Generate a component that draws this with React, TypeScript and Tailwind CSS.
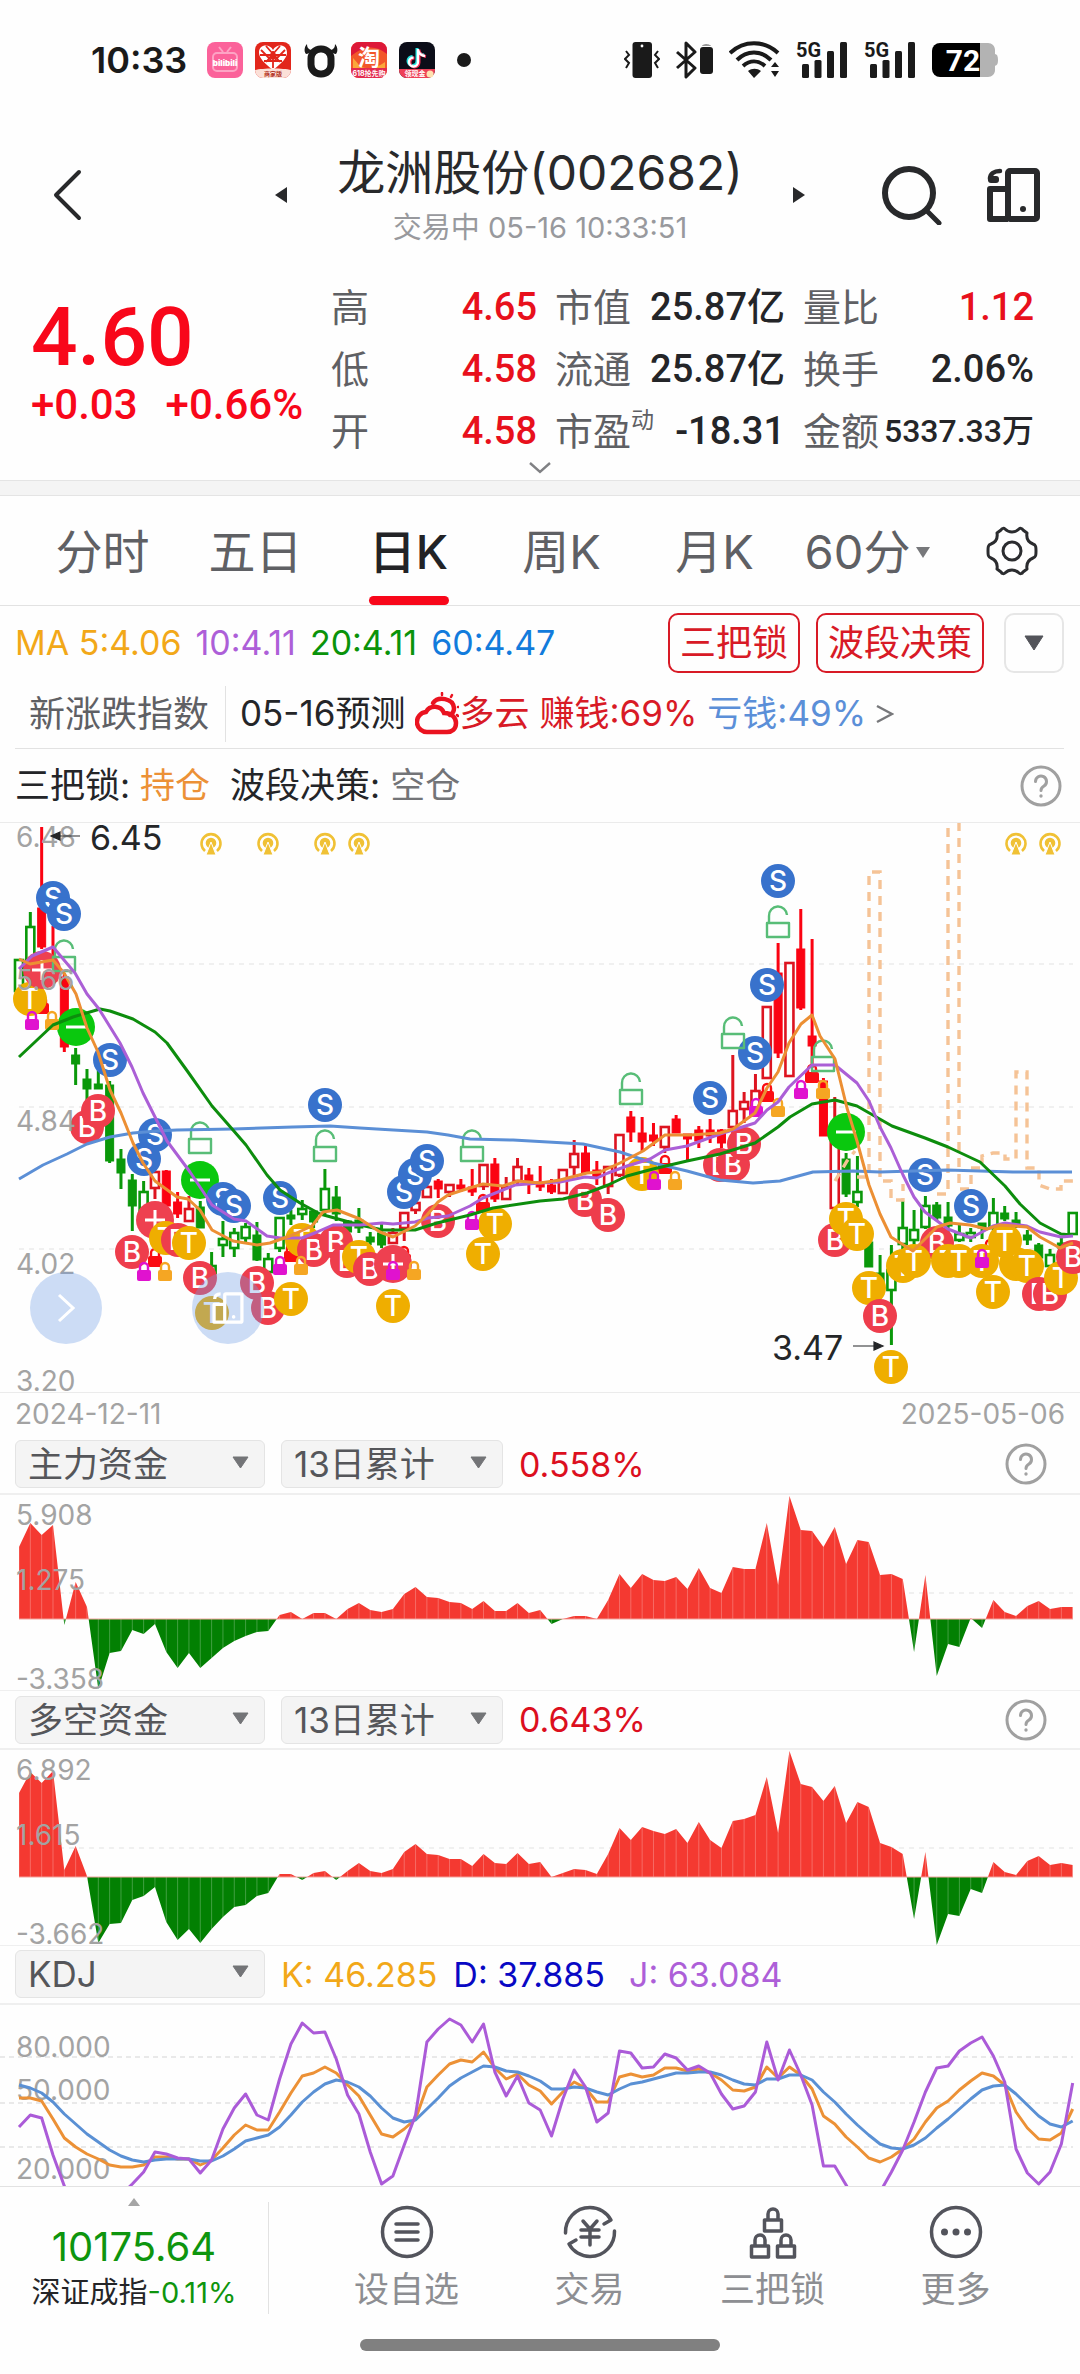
import { useState } from "react";
import type { ReactNode } from "react";

const STEP = 11.33;
const xAt = (i: number) => 19 + i * STEP;

// [high, bodyTop, bodyBottom, low, kind]
// kind: R filled red, r hollow red, G filled green, g hollow green
type Candle = [number, number, number, number, "R" | "r" | "G" | "g"];

const candles: Candle[] = [
  [136, 137, 168, 168, "g"], [89, 104, 140, 146, "g"], [4, 85, 124, 126, "R"], [103, 140, 158, 160, "R"],
  [150, 154, 224, 229, "R"], [225, 232, 241, 262, "G"], [246, 256, 266, 281, "G"], [241, 261, 266, 266, "G"],
  [258, 262, 338, 340, "G"], [326, 336, 350, 366, "G"], [351, 357, 383, 408, "G"], [358, 369, 388, 388, "g"],
  [348, 349, 365, 376, "r"], [347, 348, 383, 383, "R"], [369, 379, 391, 395, "R"], [373, 386, 398, 398, "r"],
  [378, 384, 405, 405, "G"], [429, 443, 450, 450, "g"], [398, 416, 422, 434, "g"], [405, 410, 425, 434, "g"],
  [400, 404, 415, 419, "g"], [399, 412, 437, 438, "G"], [430, 436, 449, 451, "g"], [395, 395, 425, 429, "g"],
  [387, 392, 396, 402, "G"], [377, 386, 391, 397, "g"], [387, 388, 399, 405, "G"], [346, 366, 387, 391, "g"],
  [363, 374, 391, 398, "G"], [397, 398, 409, 409, "G"], [385, 397, 405, 410, "G"], [409, 414, 419, 422, "G"],
  [401, 410, 422, 425, "G"], [405, 410, 420, 420, "r"], [389, 390, 405, 418, "r"], [380, 380, 387, 391, "r"],
  [362, 364, 374, 375, "r"], [356, 358, 366, 375, "R"], [361, 362, 369, 374, "r"], [356, 362, 366, 369, "R"],
  [346, 364, 369, 373, "R"], [341, 342, 363, 367, "r"], [335, 341, 376, 379, "R"], [354, 364, 376, 376, "r"],
  [335, 344, 358, 361, "r"], [345, 352, 358, 371, "R"], [343, 359, 364, 368, "R"], [356, 362, 369, 371, "R"],
  [346, 347, 370, 370, "r"], [317, 331, 344, 352, "r"], [323, 330, 350, 350, "R"], [338, 347, 354, 362, "R"],
  [343, 344, 363, 371, "r"], [311, 312, 352, 354, "r"], [288, 294, 309, 319, "R"], [294, 310, 319, 328, "R"],
  [300, 312, 318, 323, "R"], [303, 304, 324, 330, "r"], [292, 296, 310, 310, "R"], [311, 311, 316, 338, "R"],
  [303, 307, 318, 325, "R"], [296, 307, 313, 320, "R"], [306, 307, 320, 325, "R"], [232, 288, 304, 312, "r"],
  [269, 279, 286, 300, "r"], [251, 268, 288, 292, "r"], [183, 184, 255, 255, "r"], [120, 150, 230, 235, "R"],
  [139, 140, 253, 253, "r"], [86, 126, 185, 187, "R"], [116, 213, 223, 245, "R"], [255, 258, 313, 313, "R"],
  [274, 305, 385, 392, "r"], [330, 336, 371, 374, "G"], [333, 369, 379, 384, "g"], [415, 419, 444, 444, "G"],
  [432, 450, 465, 470, "G"], [422, 447, 467, 522, "g"], [378, 405, 421, 427, "g"], [387, 407, 417, 422, "g"],
  [373, 383, 404, 406, "g"], [379, 382, 395, 398, "G"], [379, 394, 403, 410, "G"], [402, 411, 417, 419, "g"],
  [405, 410, 414, 419, "g"], [400, 400, 405, 416, "G"], [375, 390, 405, 410, "g"], [383, 390, 396, 398, "G"],
  [389, 397, 402, 405, "G"], [407, 412, 417, 422, "G"], [420, 422, 435, 437, "G"], [426, 432, 443, 446, "g"],
  [415, 420, 425, 428, "G"], [389, 390, 411, 411, "g"],
];

const ma60 =
  "19,356 43,342 67,331 87,321 110,314 133,310 157,308 177,307 233,306 293,304 330,303 360,305 427,309 448,312 470,316 513,317 583,321 620,329 653,340 687,348 720,357 753,360 780,358 813,349 853,348 880,349 947,347 1013,349 1072,349";
const ma20 =
  "19,234 53,202 73,194 100,186 110,188 133,196 155,209 167,220 188,249 212,283 233,307 246,322 267,352 280,367 300,380 320,391 360,402 383,407 415,407 437,400 470,392 493,385 540,378 563,376 587,370 608,362 627,353 653,346 687,338 720,331 755,320 778,304 790,294 812,281 835,277 857,283 892,303 925,315 948,324 980,339 1005,363 1020,381 1040,400 1061,411 1072,412";
const ma10 =
  "19,146 32,133 53,124 75,150 87,171 99,186 120,220 132,244 143,270 167,318 190,349 212,382 234,396 246,398 267,413 280,415 302,415 317,409 333,402 360,402 382,400 393,401 415,399 428,395 448,393 470,383 483,375 515,362 540,360 560,359 585,354 597,355 608,350 627,343 650,336 665,327 687,323 720,311 755,300 767,287 778,279 789,264 812,242 835,242 857,260 869,278 880,304 891,325 903,352 914,374 925,389 948,406 971,415 993,403 1005,400 1027,403 1040,409 1061,414 1073,413";
const ma5 =
  "19,136 30,141 53,137 64,150 76,171 87,205 98,229 110,267 121,290 133,320 143,340 155,358 177,374 188,376 200,387 212,407 233,418 257,422 270,420 290,413 312,403 323,389 337,387 360,396 380,409 393,414 415,403 427,392 438,379 448,372 460,368 483,361 503,363 518,358 540,360 560,357 587,350 600,349 620,340 643,328 665,312 690,312 720,310 733,306 755,290 767,265 778,249 789,220 801,201 812,192 820,213 835,236 847,285 857,318 869,362 880,391 891,414 913,428 937,404 950,400 970,402 987,406 1000,402 1027,404 1040,414 1060,425 1073,420";

type Marker = ["S" | "B" | "T" | "+" | "-", number, number];

const markers: Marker[] = [
  ["S", 53, 75], ["S", 64, 91], ["T", 30, 176], ["+", 42, 147], ["-", 76, 204], ["S", 110, 237],
  ["B", 87, 304], ["B", 98, 288], ["S", 155, 312], ["S", 144, 336], ["-", 200, 357], ["S", 223, 376],
  ["S", 234, 383], ["S", 280, 375], ["S", 325, 282], ["+", 155, 397], ["T", 166, 415], ["B", 178, 417],
  ["T", 189, 420], ["B", 132, 429], ["B", 200, 455], ["T", 212, 490], ["B", 257, 460], ["B", 268, 485],
  ["T", 291, 476], ["T", 302, 417], ["B", 314, 427], ["B", 336, 419], ["B", 347, 438], ["T", 359, 434],
  ["B", 370, 446], ["+", 393, 441], ["T", 393, 483], ["S", 404, 369], ["S", 415, 352], ["S", 427, 338],
  ["B", 438, 398], ["T", 495, 401], ["T", 483, 431], ["B", 585, 377], ["B", 608, 392], ["T", 642, 351],
  ["S", 710, 275], ["B", 720, 342], ["B", 733, 342], ["B", 744, 321], ["S", 755, 230], ["S", 767, 162],
  ["S", 778, 58], ["-", 846, 309], ["B", 835, 417], ["T", 846, 396], ["T", 857, 411], ["T", 869, 465],
  ["B", 880, 493], ["T", 891, 544], ["B", 937, 420], ["T", 903, 443], ["T", 914, 438], ["S", 925, 352],
  ["T", 948, 438], ["T", 959, 438], ["T", 982, 438], ["S", 971, 383], ["T", 993, 469], ["T", 1016, 441],
  ["T", 1005, 418], ["T", 1027, 443], ["B", 1039, 471], ["B", 1050, 471], ["T", 1061, 455], ["B", 1073, 434],
];

const redLocks = [[42, 181], [155, 434], [291, 429], [404, 432], [483, 380], [665, 341], [767, 269], [812, 250], [990, 425]];
const magentaLocks = [[32, 197], [144, 448], [280, 442], [393, 447], [472, 397], [654, 357], [756, 284], [801, 266], [982, 435]];
const orangeLocks = [[52, 197], [165, 448], [301, 442], [414, 447], [675, 357], [778, 284], [823, 266]];
const openLocks = [[64, 117], [200, 299], [325, 307], [472, 307], [631, 250], [733, 194], [778, 83], [823, 217]];
const signals = [211, 268, 325, 359, 1016, 1050];

const mainFund = [
  72, 96, 84, 94, -6, 37, 12, -70, -34, -32, -11, -15, -5, -33, -49, -34, -49, -39, -29, -22, -17, -13, -12, 4, 7, 0,
  6, 6, 0, 10, 16, 9, 7, 10, 25, 32, 22, 21, 17, 16, 10, 18, 8, 8, 16, 6, 9, -5, 0, 3, 3, 0, 19, 45, 31, 45, 39, 38,
  42, 30, 51, 31, 26, 52, 50, 50, 96, 34, 123, 89, 88, 72, 92, 55, 79, 77, 44, 45, 40, -33, 44, -57, -25, -28, 1, -9,
  19, 7, 3, 13, 18, 10, 12, 12,
];

const longShortFund = [
  84, 105, 94, 106, 7, 31, 1, -66, -47, -46, -23, -19, -10, -45, -63, -52, -66, -52, -40, -30, -28, -19, -16, 3, 3, -3,
  4, 6, -3, 6, 14, 6, 4, 8, 25, 33, 23, 22, 18, 18, 11, 23, 14, 13, 24, 13, 15, 0, 4, 8, 7, 3, 23, 49, 37, 50, 46, 43,
  48, 34, 55, 37, 29, 56, 58, 62, 100, 44, 126, 93, 90, 76, 91, 54, 75, 70, 34, 30, 23, -42, 25, -68, -37, -39, -12,
  -16, 15, 5, 2, 16, 21, 12, 14, 12,
];

const lineJ = [
  122, 110, 113, 150, 181, 200, 210, 210, 204, 190, 179, 167, 147, 149, 153, 154, 168, 155, 124, 103, 89, 110, 115, 74,
  39, 18, 28, 27, 54, 90, 109, 147, 179, 171, 140, 110, 37, 24, 14, 20, 37, 19, 67, 91, 71, 98, 105, 131, 94, 65, 82,
  117, 108, 46, 48, 63, 62, 49, 53, 65, 61, 68, 89, 104, 101, 87, 37, 75, 45, 70, 100, 161, 161, 180, 200, 205, 187,
  167, 145, 117, 87, 63, 61, 46, 38, 32, 51, 77, 144, 168, 179, 167, 139, 78,
];
const lineK = [
  93, 93, 96, 114, 133, 142, 149, 154, 160, 162, 162, 160, 152, 152, 154, 154, 160, 155, 143, 130, 120, 125, 125, 107,
  88, 71, 68, 62, 68, 80, 91, 110, 129, 132, 124, 114, 82, 70, 59, 55, 57, 47, 63, 74, 69, 80, 86, 99, 87, 77, 83, 97,
  97, 72, 69, 72, 70, 63, 63, 66, 64, 68, 75, 85, 86, 82, 62, 73, 62, 70, 84, 111, 119, 132, 142, 153, 157, 152, 144,
  134, 117, 103, 96, 85, 76, 68, 71, 80, 107, 123, 134, 135, 128, 104,
];
const lineD = [
  80, 83, 88, 97, 109, 119, 129, 137, 145, 151, 155, 157, 155, 154, 154, 154, 156, 156, 151, 144, 136, 133, 130, 122,
  110, 97, 87, 79, 75, 77, 82, 91, 103, 113, 117, 115, 104, 93, 81, 73, 67, 61, 62, 66, 67, 71, 76, 84, 84, 82, 83, 87,
  90, 84, 79, 77, 74, 71, 68, 68, 67, 67, 70, 75, 79, 80, 74, 74, 70, 70, 75, 87, 97, 109, 120, 130, 139, 143, 144,
  140, 133, 123, 114, 104, 94, 85, 81, 80, 89, 100, 111, 119, 122, 116,
];

const toPoints = (ys: number[]) => ys.map((y, i) => `${xAt(i)},${y}`).join(" ");

const markerFill = { S: "#3872cc", B: "#ee3d4c", T: "#efae00", "+": "#ee4050", "-": "#0ac80e" };

function CandleStick({ i, data }: { i: number; data: Candle }) {
  const [high, top, bottom, low, kind] = data;
  const color = kind === "R" ? "#fb0312" : kind === "r" ? "#dd1420" : "#0a980a";
  const hollow = kind === "r" || kind === "g";
  const x = xAt(i);
  return (
    <g stroke={color} strokeWidth="3">
      <path d={`M${x} ${high}V${top}M${x} ${bottom}V${low}`} />
      <rect x={x - 4} y={top} width="8" height={Math.max(bottom - top, 2)} fill={hollow ? "#fff" : color} strokeWidth={hollow ? 2.6 : 1} />
    </g>
  );
}

function Lock({ x, y, color }: { x: number; y: number; color: string }) {
  return (
    <g>
      <path d={`M${x - 4} ${y}v-4a4 4 0 0 1 8 0v4`} fill="none" stroke={color} strokeWidth="2.4" />
      <rect x={x - 7} y={y - 1} width="14" height="11" rx="2" fill={color} />
    </g>
  );
}

function MarkerDot({ marker }: { marker: Marker }) {
  const [kind, x, y] = marker;
  if (kind === "+" || kind === "-") {
    return (
      <g>
        <circle cx={x} cy={y} r="19" fill={markerFill[kind]} />
        <path d={kind === "-" ? `M${x - 10} ${y}h20` : `M${x - 10} ${y}h20M${x} ${y - 10}v20`} stroke="#fff" strokeWidth="3" />
      </g>
    );
  }
  return (
    <g>
      <circle cx={x} cy={y} r="17" fill={markerFill[kind]} />
      <text x={x} y={y + 10} textAnchor="middle" fontSize="28" fontWeight="500" fill="#fff">
        {kind}
      </text>
    </g>
  );
}

function KLineChart() {
  return (
    <svg viewBox="0 0 1080 569" className="block h-auto w-full" role="img" aria-label="日K">
      <g stroke="#ececec" strokeWidth="1.5" strokeDasharray="5 5">
        <path d="M19 141H1073M19 284H1073M19 426H1073" />
      </g>
      {candles.map((c, i) => (
        <CandleStick key={i} i={i} data={c} />
      ))}
      <path
        d="M835 358l12-20 8-10M857 354H869V49H880V358H891V377H903V361M937 371H948V-4H959V366H971V345H982V333L993 330H1005V336H1016V249H1027V345H1039V362L1050 366H1061V358H1073"
        fill="none"
        stroke="#f5c396"
        strokeWidth="3.4"
        strokeDasharray="9 7"
      />
      {redLocks.map(([x, y]) => (
        <Lock key={x} x={x} y={y} color="#fb0d12" />
      ))}
      {markers.map((m, i) => (
        <MarkerDot key={i} marker={m} />
      ))}
      {magentaLocks.map(([x, y]) => (
        <Lock key={x} x={x} y={y} color="#e012cf" />
      ))}
      {orangeLocks.map(([x, y]) => (
        <Lock key={x} x={x} y={y} color="#f5a623" />
      ))}
      {openLocks.map(([x, y]) => (
        <path
          key={x}
          d={`M${x - 11} ${y + 17}h22v14h-22zM${x - 9} ${y + 17}v-7a9 9 0 0 1 18-1`}
          fill="none"
          stroke="#58bd77"
          strokeWidth="2.4"
          strokeLinejoin="round"
        />
      ))}
      <g fill="none" strokeWidth="3" strokeLinejoin="round">
        <polyline points={ma60} stroke="#5b8fd6" />
        <polyline points={ma20} stroke="#0d8d0d" />
        <polyline points={ma10} stroke="#ab5fd6" />
        <polyline points={ma5} stroke="#ec8f33" />
      </g>
      {signals.map((x) => (
        <g key={x} fill="none" stroke="#f0c135" strokeWidth="2.6">
          <path d={`M${x - 6} 28a9.5 9.5 0 1 1 12 0`} />
          <circle cx={x} cy="20" r="4" fill="#f0c135" />
          <path d={`M${x} 19l-5 13h10z`} fill="#f0c135" stroke="#fff" strokeWidth="1" />
        </g>
      ))}
      <g fill="#a3a3a3" fontSize="28">
        <text x="16" y="24">6.48</text>
        <text x="16" y="167">5.66</text>
        <text x="16" y="308">4.84</text>
        <text x="16" y="451">4.02</text>
        <text x="16" y="568">3.20</text>
      </g>
      <g fill="#242628" fontSize="34">
        <text x="90" y="27">6.45</text>
        <text x="772" y="537">3.47</text>
      </g>
      <g stroke="#242628" fill="#242628" strokeWidth="1.2">
        <path d="M60 13h20M60 9l-9 4 9 4zM853 523h22M874 519l9 4-9 4z" />
      </g>
    </svg>
  );
}

function FundChart({ id, values, zero, grid, labels }: { id: string; values: number[]; zero: number; grid: number; labels: string[] }) {
  const area = `${xAt(0)},${zero} ${toPoints(values.map((v) => zero - v))} ${xAt(93)},${zero}`;
  return (
    <svg viewBox="0 0 1080 195" className="block h-auto w-full" role="img" aria-label={labels.join(" ")}>
      <clipPath id={`${id}-up`}>
        <rect width="1080" height={zero} />
      </clipPath>
      <clipPath id={`${id}-down`}>
        <rect y={zero} width="1080" height={195 - zero} />
      </clipPath>
      <clipPath id={`${id}-area`}>
        <polygon points={area} />
      </clipPath>
      <path d={`M19 ${grid}H1073`} stroke="#ececec" strokeWidth="1.5" strokeDasharray="5 5" />
      <polygon points={area} fill="#f43931" clipPath={`url(#${id}-up)`} />
      <polygon points={area} fill="#028002" clipPath={`url(#${id}-down)`} />
      <path d={values.map((_, i) => `M${xAt(i)} 0V195`).join("")} stroke="#fff" strokeOpacity="0.25" clipPath={`url(#${id}-area)`} />
      <path d={`M19 ${zero}H1073`} stroke="#f3a29c" strokeWidth="1" />
      <g fill="#a3a3a3" fontSize="28">
        <text x="16" y="30">{labels[0]}</text>
        <text x="16" y="95">{labels[1]}</text>
        <text x="16" y="194">{labels[2]}</text>
      </g>
    </svg>
  );
}

function KdjChart() {
  return (
    <svg viewBox="0 0 1080 181" className="block h-auto w-full overflow-hidden" role="img" aria-label="KDJ">
      <path d="M0 52H1073M0 98H1073M0 142H1073" stroke="#e2e2e2" strokeWidth="1.5" strokeDasharray="5 4" />
      <g fill="#a3a3a3" fontSize="28">
        <text x="16" y="52">80.000</text>
        <text x="16" y="95">50.000</text>
        <text x="16" y="174">20.000</text>
      </g>
      <g fill="none" strokeWidth="3" strokeLinejoin="round">
        <polyline points={toPoints(lineK)} stroke="#ec9136" />
        <polyline points={toPoints(lineD)} stroke="#5a90d4" />
        <polyline points={toPoints(lineJ)} stroke="#ab5bd8" />
      </g>
    </svg>
  );
}

function HelpButton({ label }: { label: string }) {
  return (
    <button type="button" aria-label={label} className="ml-auto shrink-0">
      <svg width="42" height="42" viewBox="0 0 42 42" fill="none" stroke="#a0a0a0" strokeWidth="3" strokeLinecap="round">
        <circle cx="21" cy="21" r="19" />
        <path d="M15.5 16.5a5.5 5.5 0 1 1 8.500 4.600c-2 1.300-3 2.300-3 4.400" />
        <circle cx="21" cy="31" r="1" fill="#a0a0a0" strokeWidth="1.4" />
      </svg>
    </button>
  );
}

function Picker({ label, options, wide }: { label: string; options: string[]; wide?: boolean }) {
  return (
    <div className={wide ? "relative w-[250px]" : "relative w-[222px]"}>
      <select
        aria-label={label}
        className="h-12 w-full appearance-none rounded-md border border-[#e4e4e4] bg-[#f4f4f4] pl-3 text-[35px] leading-[44px] text-[#55565a] outline-none"
      >
        {options.map((o) => (
          <option key={o}>{o}</option>
        ))}
      </select>
      <svg width="17" height="13" viewBox="0 0 17 13" className="pointer-events-none absolute right-4 top-4">
        <path d="M1 1h15L8.5 12z" fill="#737477" stroke="#737477" strokeLinejoin="round" />
      </svg>
    </div>
  );
}

function Signal() {
  return (
    <svg width="52" height="38" viewBox="0 0 52 38" className="overflow-visible">
      <text x="0" y="16" fontSize="20" fontWeight="700" fill="#1a1a1a" className="[font-family:Roboto,sans-serif]">5G</text>
      <g fill="#1a1a1a">
        <rect x="6" y="23" width="7" height="14" rx="1.5" />
        <rect x="18.5" y="19" width="7" height="18" rx="1.5" />
        <rect x="31" y="10" width="7" height="27" rx="1.5" />
        <rect x="44" y="1" width="7" height="36" rx="1.5" />
      </g>
    </svg>
  );
}

function StatusBar() {
  return (
    <div className="flex h-[120px] items-center pl-[91px] pr-[82px] text-[#1a1a1a]">
      <span className="text-[36px] font-semibold leading-10">10:33</span>
      <div className="ml-5 flex items-center gap-3">
        <svg width="36" height="36" viewBox="0 0 36 36">
          <rect width="36" height="36" rx="8" fill="#fb629a" />
          <g fill="none" stroke="#fda3c4" strokeWidth="2">
            <rect x="6" y="11" width="24" height="18" rx="4" />
            <path d="M12 5l4 5M24 5l-4 5" />
          </g>
          <text x="18" y="24" textAnchor="middle" fontSize="8" fontWeight="900" fill="#fff">bilibili</text>
        </svg>
        <svg width="36" height="36" viewBox="0 0 36 36">
          <rect width="36" height="36" rx="8" fill="#e2261b" />
          <path d="M18 28C9 21 4 16 4 10.5 4 6 7 3.5 10.5 3.5S16.5 5 18 8c1.500-3 4-4.500 7.500-4.500S32 6 32 10.500C32 16 27 21 18 28z" fill="#fff" />
          <path d="M6 8l10 10M11 4l14 16M30 8L20 18M25 4L11 20M18 9v17M5 13h26M9 19h18" stroke="#e2261b" strokeWidth="1.8" />
          <circle cx="18" cy="14" r="3.5" fill="#e2261b" />
          <path d="M0 28c8-2 28-2 36 0a8 8 0 0 1-8 8H8a8 8 0 0 1-8-8z" fill="#fbe0d8" />
          <text x="18" y="34" textAnchor="middle" fontSize="6" fontWeight="700" fill="#b3301f">商家版</text>
        </svg>
        <svg width="36" height="36" viewBox="0 0 36 36">
          <path d="M4 2c0 4 2 6 6 6-3 2-5 4-7 4-2-2-2-7 1-10zM32 2c0 4-2 6-6 6 3 2 5 4 7 4 2-2 2-7-1-10z" fill="#1a1a1a" />
          <rect x="8" y="7" width="20" height="25" rx="9.5" fill="none" stroke="#1a1a1a" strokeWidth="7" />
        </svg>
        <svg width="36" height="36" viewBox="0 0 36 36">
          <rect width="36" height="36" rx="8" fill="#f2572b" />
          <path d="M0 8a8 8 0 0 1 8-8h20a8 8 0 0 1 8 8v4C24 2 12 4 0 14z" fill="#dd1838" />
          <path d="M2 16c6 6 6 10 14 10s12-2 18-6v6H2z" fill="#fba83a" />
          <path d="M0 26h36v2a8 8 0 0 1-8 8H8a8 8 0 0 1-8-8z" fill="#e32b4f" />
          <text x="18" y="23" textAnchor="middle" fontSize="22" fontWeight="700" fill="#fff">淘</text>
          <text x="18" y="34" textAnchor="middle" fontSize="7" fontWeight="700" fill="#fff">618抢先购</text>
        </svg>
        <svg width="36" height="36" viewBox="0 0 36 36">
          <rect width="36" height="36" rx="8" fill="#0b0d18" />
          <g fill="none" strokeWidth="3">
            <path d="M18 6v13a4.500 4.500 0 1 1-4.500-4.500M18 7c1 4 3 5.500 7 6" stroke="#25e5e0" />
            <path d="M20 7.500v13a4.500 4.500 0 1 1-4.500-4.500M20 8.500c1 4 3 5.500 7 6" stroke="#f52b53" />
            <path d="M19 7v13a4.500 4.500 0 1 1-4.500-4.500M19 8c1 4 3 5.500 7 6" stroke="#fff" strokeWidth="2.4" />
          </g>
          <path d="M0 27h36v1a8 8 0 0 1-8 8H8a8 8 0 0 1-8-8z" fill="#ee4058" />
          <text x="16" y="34" textAnchor="middle" fontSize="7" fontWeight="700" fill="#fff">领现金</text>
          <circle cx="31" cy="32" r="3.5" fill="#ffe2b0" />
        </svg>
        <span className="ml-2.5 size-3.5 rounded-full bg-[#1a1a1a]" />
      </div>
      <div className="ml-auto flex items-center gap-4">
        <svg width="36" height="38" viewBox="0 0 36 38">
          <rect x="8.5" y="1" width="19.5" height="36" rx="3" fill="#1a1a1a" />
          <circle cx="18" cy="5" r="1.4" fill="#fff" />
          <path d="M2 10l3 4-4 4 4 4-3 5M34 10l-3 4 4 4-4 4 3 5" fill="none" stroke="#1a1a1a" strokeWidth="2" />
        </svg>
        <svg width="37" height="38" viewBox="0 0 37 38">
          <path d="M1 11l18 16-9 9v-34l9 9-18 16" fill="none" stroke="#1a1a1a" strokeWidth="3" strokeLinejoin="round" />
          <rect x="24" y="6" width="13" height="27" rx="3" fill="#1a1a1a" />
          <path d="M26 5c0-1 2-2 4-2s5 1 5 2z" fill="#999" />
        </svg>
        <svg width="51" height="38" viewBox="0 0 51 38">
          <g fill="none" stroke="#1a1a1a" strokeWidth="4">
            <path d="M1 12C15-1 35-1 49 12M8 19C18 9 32 9 42 19M14 25c7-6 15-6 22 0" />
          </g>
          <path d="M19 30c4-3 9-3 13 0L25 37zM42 26l4-5 4 5zM42 30h8l-4 6z" fill="#1a1a1a" />
        </svg>
        <Signal />
        <Signal />
        <svg width="66" height="36" viewBox="0 0 66 36">
          <path d="M8 1h48c4 0 7 3 7 7v4c2 0 3 2 3 6s-1 5-3 6v4c0 4-3 7-7 7H8z" fill="#b3b3b3" />
          <path d="M48 1H8a8 8 0 0 0-8 8v18a8 8 0 0 0 8 8h40z" fill="#000" />
          <text x="31" y="29" textAnchor="middle" fontSize="30" fontWeight="700" fill="#fff" className="[font-family:Roboto,sans-serif]">72</text>
        </svg>
      </div>
    </div>
  );
}

function Header() {
  return (
    <header className="grid grid-cols-[222px_1fr_222px] items-center pb-0.5 pt-5 text-[#28292b]">
      <button type="button" aria-label="返回" className="ml-[52px] justify-self-start">
        <svg width="30" height="52" viewBox="0 0 30 52" fill="none" stroke="currentColor" strokeWidth="4" strokeLinecap="round" strokeLinejoin="round">
          <path d="M27 3L4 26l23 23" />
        </svg>
      </button>
      <div className="flex items-center justify-between px-[52px]">
        <button type="button" aria-label="上一只">
          <svg width="14" height="18" viewBox="0 0 14 18">
            <path d="M13 1v16L1 9z" fill="currentColor" />
          </svg>
        </button>
        <div className="text-center">
          <h1 className="whitespace-nowrap text-[48px] leading-[66px]">龙洲股份(002682)</h1>
          <p className="text-[29px] leading-[44px] text-[#98999d]">交易中 05-16 10:33:51</p>
        </div>
        <button type="button" aria-label="下一只">
          <svg width="14" height="18" viewBox="0 0 14 18">
            <path d="M1 1v16l12-8z" fill="currentColor" />
          </svg>
        </button>
      </div>
      <div className="flex justify-between pl-6 pr-10">
        <button type="button" aria-label="搜索">
          <svg width="60" height="60" viewBox="0 0 60 60" fill="none" stroke="currentColor" strokeWidth="6" strokeLinecap="round">
            <circle cx="27" cy="28" r="24" />
            <path d="M45 46l12 12" strokeWidth="5" />
          </svg>
        </button>
        <button type="button" aria-label="横屏">
          <svg width="53" height="54" viewBox="0 0 53 54" fill="none" stroke="currentColor" strokeWidth="6" strokeLinejoin="round">
            <rect x="21" y="3" width="29" height="48" rx="2" />
            <path d="M21 21H3v30h18" />
            <circle cx="36" cy="41" r="3" fill="currentColor" stroke="none" />
            <path d="M3 11C3 6 7 3 13 3" strokeWidth="4.5" strokeLinecap="round" />
            <rect x="1" y="8" width="11" height="7" rx="3" fill="currentColor" stroke="none" />
          </svg>
        </button>
      </div>
    </header>
  );
}

function Quote({ label, value, tone = "dark" }: { label: ReactNode; value: string; tone?: "red" | "dark" | "small" }) {
  const tones = {
    red: "text-[38px] text-[#e8101c]",
    dark: "text-[38px] text-[#242528]",
    small: "text-[32px] text-[#242528]",
  };
  return (
    <div className="flex h-[62px] items-center justify-between whitespace-nowrap">
      <dt className="flex text-[38px] leading-[62px] text-[#5f6064]">{label}</dt>
      <dd className={`${tones[tone]} font-medium leading-[56px] [font-family:Roboto,'Noto_Sans_CJK_SC',sans-serif]`}>{value}</dd>
    </div>
  );
}

function QuotePanel() {
  return (
    <section>
      <div className="flex pl-[31px] pr-[46px] pt-6">
        <div className="w-[300px] shrink-0 pt-4 font-medium text-[#f8071a] [font-family:Roboto,sans-serif]">
          <p className="text-[82px] leading-[90px]">4.60</p>
          <p className="flex gap-7 text-[42px] leading-[46px]">
            <span>+0.03</span>
            <span>+0.66%</span>
          </p>
        </div>
        <dl className="grid flex-1 grid-cols-[206fr_230fr_231fr] gap-x-[18px]">
          <Quote label="高" value="4.65" tone="red" />
          <Quote label="市值" value="25.87亿" />
          <Quote label="量比" value="1.12" tone="red" />
          <Quote label="低" value="4.58" tone="red" />
          <Quote label="流通" value="25.87亿" />
          <Quote label="换手" value="2.06%" />
          <Quote label="开" value="4.58" tone="red" />
          <Quote
            label={
              <>
                市盈<span className="text-[23px] leading-10">动</span>
              </>
            }
            value="-18.31"
          />
          <Quote label="金额" value="5337.33万" tone="small" />
        </dl>
      </div>
      <button type="button" aria-label="展开" className="mx-auto flex h-[18px] w-16 justify-center">
        <svg width="22" height="12" viewBox="0 0 22 12" fill="none" stroke="#808184" strokeWidth="2.4">
          <path d="M1 1l10 9L21 1" />
        </svg>
      </button>
    </section>
  );
}

const periods = ["分时", "五日", "日K", "周K", "月K", "60分"];

function PeriodTabs() {
  const [active, setActive] = useState("日K");
  return (
    <nav className="flex h-[110px] border-b border-[#e2e2e2] pl-[26px]">
      {periods.map((p) => (
        <button
          key={p}
          type="button"
          onClick={() => setActive(p)}
          className={`relative flex flex-1 items-center justify-center whitespace-nowrap pt-1 text-[47px] ${active === p ? "font-medium text-[#222326]" : "text-[#5f6064]"}`}
        >
          {p}
          {p === "60分" && (
            <svg width="14" height="11" viewBox="0 0 14 11" className="ml-1.5">
              <path d="M0 0h14L7 11z" fill="#77787b" />
            </svg>
          )}
          {active === p && <span className="absolute bottom-0 h-[9px] w-20 rounded-full bg-[#f8071a]" />}
        </button>
      ))}
      <button type="button" aria-label="设置" className="flex w-[136px] items-center justify-center">
        <svg width="52" height="50" viewBox="0 0 52 50" fill="none" stroke="#2b2c2f" strokeWidth="3" strokeLinejoin="round">
          <path d="M15 4c1-2 3-2 4-1 4 4 10 4 14 0 1-1 3-1 4 1l4 3c-1 6 1 9 6 11 3 1 3 3 3 7s0 6-3 7c-5 2-7 5-6 11l-4 3c-1 2-3 2-4 1-4-4-10-4-14 0-1 1-3 1-4-1l-4-3c1-6-1-9-6-11-3-1-3-3-3-7s0-6 3-7c5-2 7-5 6-11z" />
          <circle cx="26" cy="25" r="9" />
        </svg>
      </button>
    </nav>
  );
}

function IndicatorRows() {
  return (
    <section className="pl-[15px] pr-4">
      <div className="flex h-[73px] items-center gap-4 text-[34px]">
        <p className="mr-auto flex gap-3.5 whitespace-nowrap">
          <span className="text-[#f2a818]">MA 5:4.06</span>
          <span className="text-[#ad5fd8]">10:4.11</span>
          <span className="text-[#0a930a]">20:4.11</span>
          <span className="text-[#127bdc]">60:4.47</span>
        </p>
        <button type="button" className="h-[60px] rounded-[10px] border-2 border-[#d81a26] px-2.5 text-[36px] leading-none text-[#d81a26]">
          三把锁
        </button>
        <button type="button" className="h-[60px] rounded-[10px] border-2 border-[#d81a26] px-2.5 text-[36px] leading-none text-[#d81a26]">
          波段决策
        </button>
        <button type="button" aria-label="更多指标" className="ml-1 flex h-[60px] w-[60px] items-center justify-center rounded-[10px] border-2 border-[#e6e6e6]">
          <svg width="20" height="16" viewBox="0 0 20 16">
            <path d="M1 1h18l-9 14z" fill="#53545a" stroke="#53545a" strokeLinejoin="round" />
          </svg>
        </button>
      </div>
      <a href="#forecast" className="flex h-[70px] items-center whitespace-nowrap border-b border-[#e2e2e2] pl-3.5 text-[35px]">
        <span className="border-r border-[#e2e2e2] pr-4 text-[36px] leading-[56px] text-[#5f6064]">新涨跌指数</span>
        <span className="ml-3.5 text-[#242528]">05-16预测</span>
        <svg width="44" height="44" viewBox="0 0 44 44" fill="none" stroke="#ea1320" strokeWidth="4.5" strokeLinecap="round" className="ml-2.5">
          <path d="M13 40a10 10 0 0 1-2-20 10 10 0 0 1 18 1c9 0 12 6 12 10 0 6-4 9-9 9z" />
          <path d="M18 11c5-7 20-5 21 5 0 4-2 6-4 7" />
          <path d="M27 3V1M36 5l1-2M43 15h1M42 23l1 1" strokeWidth="2.5" />
        </svg>
        <span className="text-[#d81a26]">多云</span>
        <span className="ml-2.5 text-[#d81a26]">赚钱:69%</span>
        <span className="ml-2.5 text-[#5b8fd8]">亏钱:49%</span>
        <svg width="18" height="20" viewBox="0 0 18 20" fill="none" stroke="#77787b" strokeWidth="2.5" className="ml-2.5">
          <path d="M1 2l15 8-15 8" />
        </svg>
      </a>
      <div className="flex h-[73px] items-center whitespace-nowrap pr-0.5 text-[35px] text-[#242528]">
        <span>三把锁:</span>
        <span className="ml-2.5 text-[#ec9136]">持仓</span>
        <span className="ml-5">波段决策:</span>
        <span className="ml-2.5 text-[#737477]">空仓</span>
        <HelpButton label="指标说明" />
      </div>
    </section>
  );
}

function FooterIcon({ name }: { name: string }) {
  return (
    <svg width="54" height="54" viewBox="0 0 54 54" fill="none" stroke="#53545c" strokeWidth="3.5" strokeLinecap="round" strokeLinejoin="round">
      {name === "设自选" && (
        <>
          <circle cx="27" cy="27" r="24.5" />
          <path d="M16 19h22M16 27h22M16 35h22" />
        </>
      )}
      {name === "交易" && (
        <>
          <path d="M2.5 28C2 15 12 2.5 27 2.5c9 0 17 5 21 12.5l-7 4M51.5 26C52 39 42 51.5 27 51.5 18 51.5 10 46.5 6 39l7-4" />
          <path d="M20 16l7 8 7-8M18 25h18M18 32h18M27 24v16" />
        </>
      )}
      {name === "三把锁" && (
        <>
          <path d="M18.5 15h17v11h-17zM5.5 41h17v11h-17zM31.5 41h17v11h-17z" />
          <path d="M22 14V9a5 5 0 0 1 10 0v5M9 40v-5a5 5 0 0 1 10 0v5M35 40v-5a5 5 0 0 1 10 0v5" />
        </>
      )}
      {name === "更多" && (
        <>
          <circle cx="27" cy="27" r="24.5" />
          <g fill="#53545c" stroke="none">
            <circle cx="15.5" cy="27" r="3.5" />
            <circle cx="27" cy="27" r="3.5" />
            <circle cx="38.5" cy="27" r="3.5" />
          </g>
        </>
      )}
    </svg>
  );
}

function Footer() {
  return (
    <footer className="border-t border-[#e2e2e2]">
      <div className="flex">
        <button type="button" className="my-[15px] flex w-[269px] shrink-0 flex-col items-center border-r border-[#e2e2e2]">
          <svg width="12" height="8" viewBox="0 0 12 8" className="-mt-1">
            <path d="M6 0l6 8H0z" fill="#a5a5a5" />
          </svg>
          <span className="mt-4 text-[40px] leading-[50px] text-[#0e950e]">10175.64</span>
          <span className="flex text-[29px] leading-[42px] text-[#242528]">
            深证成指<span className="text-[#0e950e]">-0.11%</span>
          </span>
        </button>
        <nav className="flex flex-1 pl-[46px] pr-[33px] pt-[18px]">
          {["设自选", "交易", "三把锁", "更多"].map((name) => (
            <button key={name} type="button" className="flex flex-1 flex-col items-center text-[35px] leading-[56px] text-[#8d8e92]">
              <FooterIcon name={name} />
              <span className="mt-0.5">{name}</span>
            </button>
          ))}
        </nav>
      </div>
      <div className="mx-auto mb-5 mt-2.5 h-3 w-1/3 rounded-full bg-[#808080]" />
    </footer>
  );
}

export default function App() {
  return (
    <main className="min-h-screen bg-[#fefefe] [font-family:Inter,'Noto_Sans_CJK_SC',sans-serif]">
      <StatusBar />
      <Header />
      <QuotePanel />
      <div className="h-4 border-y border-[#e4e4e4] bg-[#f4f4f4]" />
      <PeriodTabs />
      <IndicatorRows />

      <section className="relative border-y border-[#ebebeb]">
        <KLineChart />
        <button type="button" aria-label="向右展开" className="absolute bottom-12 left-[30px] flex size-[72px] items-center justify-center rounded-full bg-[#6f9fe6]/35">
          <svg width="18" height="30" viewBox="0 0 18 30" fill="none" stroke="#fff" strokeWidth="3">
            <path d="M2 2l14 13L2 28" />
          </svg>
        </button>
        <button type="button" aria-label="全屏" className="absolute bottom-12 left-[192px] flex size-[72px] items-center justify-center rounded-full bg-[#6f9fe6]/35">
          <svg width="32" height="32" viewBox="0 0 53 54" fill="none" stroke="#fff" strokeWidth="5.5" strokeLinejoin="round">
            <rect x="21" y="3" width="29" height="48" rx="2" />
            <path d="M21 21H3v30h18M4 12C4 6 7 3 14 3" />
            <circle cx="36" cy="42" r="3" fill="#fff" stroke="none" />
          </svg>
        </button>
      </section>
      <div className="flex h-[42px] items-center justify-between px-[15px] text-[28px] text-[#a3a3a3]">
        <time>2024-12-11</time>
        <time>2025-05-06</time>
      </div>

      <div className="flex h-[60px] items-center gap-4 border-b-2 border-[#efefef] pl-[15px] pr-[33px]">
        <Picker label="指标" options={["主力资金", "多空资金", "KDJ"]} wide />
        <Picker label="周期" options={["13日累计"]} />
        <span className="text-[34px] text-[#dc0f1e]">0.558%</span>
        <HelpButton label="主力资金说明" />
      </div>
      <FundChart id="main" values={mainFund} zero={124} grid={98} labels={["5.908", "1.275", "-3.358"]} />

      <div className="flex h-[60px] items-center gap-4 border-b-2 border-t border-[#efefef] pl-[15px] pr-[33px]">
        <Picker label="指标" options={["多空资金", "主力资金", "KDJ"]} wide />
        <Picker label="周期" options={["13日累计"]} />
        <span className="text-[34px] text-[#dc0f1e]">0.643%</span>
        <HelpButton label="多空资金说明" />
      </div>
      <FundChart id="longshort" values={longShortFund} zero={127} grid={98} labels={["6.892", "1.615", "-3.662"]} />

      <div className="flex h-[60px] items-center gap-4 border-b-2 border-t border-[#efefef] pl-[15px] pr-[33px] text-[34px]">
        <Picker label="指标" options={["KDJ", "主力资金", "多空资金"]} wide />
        <span className="text-[#f2a818]">K: 46.285</span>
        <span className="text-[#0808c4]">D: 37.885</span>
        <span className="ml-2 text-[#ad5fd8]">J: 63.084</span>
      </div>
      <KdjChart />
      <Footer />
    </main>
  );
}
